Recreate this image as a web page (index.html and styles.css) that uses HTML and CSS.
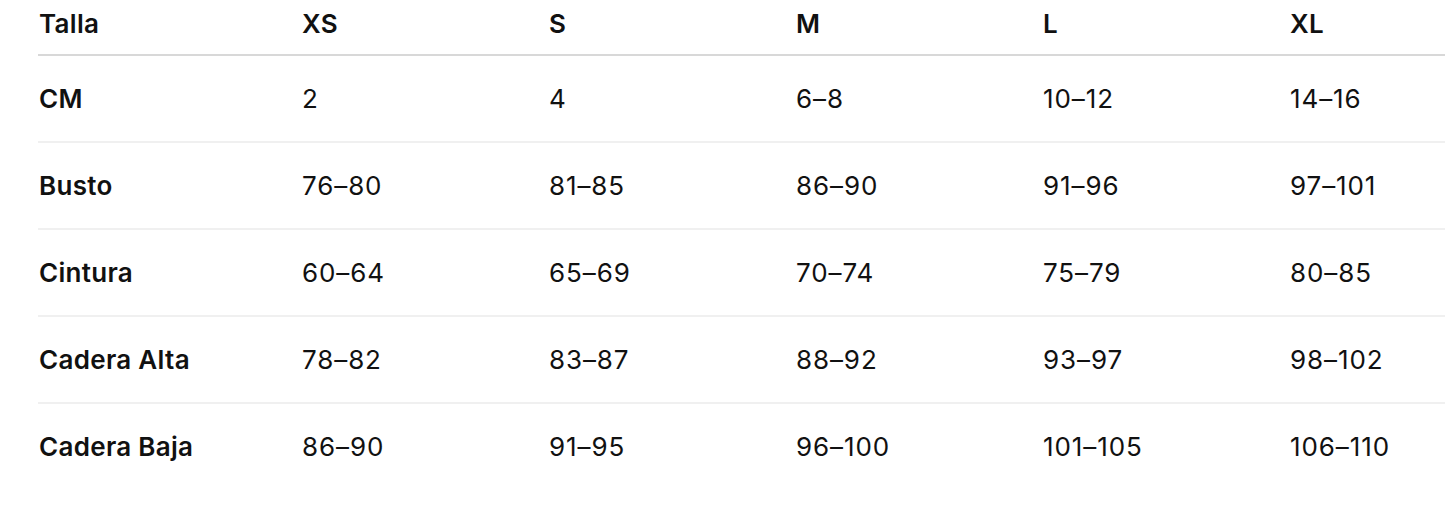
FILE: index.html
```html
<!DOCTYPE html>
<html lang="es">
<head>
<meta charset="utf-8">
<title>Guía de tallas</title>
<link rel="stylesheet" href="styles.css">
</head>
<body>
<div class="size-table">
  <div class="row head">
    <div class="cell label">Talla</div>
    <div class="cell">XS</div>
    <div class="cell">S</div>
    <div class="cell">M</div>
    <div class="cell">L</div>
    <div class="cell">XL</div>
  </div>
  <div class="row">
    <div class="cell label">CM</div>
    <div class="cell">2</div>
    <div class="cell">4</div>
    <div class="cell">6–8</div>
    <div class="cell">10–12</div>
    <div class="cell">14–16</div>
  </div>
  <div class="row">
    <div class="cell label">Busto</div>
    <div class="cell">76–80</div>
    <div class="cell">81–85</div>
    <div class="cell">86–90</div>
    <div class="cell">91–96</div>
    <div class="cell">97–101</div>
  </div>
  <div class="row">
    <div class="cell label">Cintura</div>
    <div class="cell">60–64</div>
    <div class="cell">65–69</div>
    <div class="cell">70–74</div>
    <div class="cell">75–79</div>
    <div class="cell">80–85</div>
  </div>
  <div class="row">
    <div class="cell label">Cadera Alta</div>
    <div class="cell">78–82</div>
    <div class="cell">83–87</div>
    <div class="cell">88–92</div>
    <div class="cell">93–97</div>
    <div class="cell">98–102</div>
  </div>
  <div class="row last">
    <div class="cell label">Cadera Baja</div>
    <div class="cell">86–90</div>
    <div class="cell">91–95</div>
    <div class="cell">96–100</div>
    <div class="cell">101–105</div>
    <div class="cell">106–110</div>
  </div>
</div>
</body>
</html>
```
FILE: styles.css
```css
html, body {
  margin: 0;
  padding: 0;
  background: #ffffff;
  overflow: hidden;
}
body {
  font-family: Inter, "Noto Sans", "Liberation Sans", sans-serif;
  color: #111111;
  font-size: 26px;
}
.size-table {
  margin-left: 38px;
}
.row {
  display: grid;
  grid-template-columns: 263px repeat(4, 247px) 1fr;
  border-bottom: 2px solid #f0f0f0;
  height: 85px;
  align-items: center;
}
.row.head {
  height: 54px;
  border-bottom: 2px solid #d8d8d8;
  align-items: start;
}
.row.head .cell {
  font-weight: 600;
  padding-top: 9px;
  letter-spacing: 0.3px;
}
.row.last {
  border-bottom: none;
}
.cell {
  padding-left: 1px;
  line-height: 30px;
  white-space: nowrap;
  letter-spacing: 0.9px;
}
.cell.label {
  font-weight: 600;
  letter-spacing: 0.3px;
}
```
